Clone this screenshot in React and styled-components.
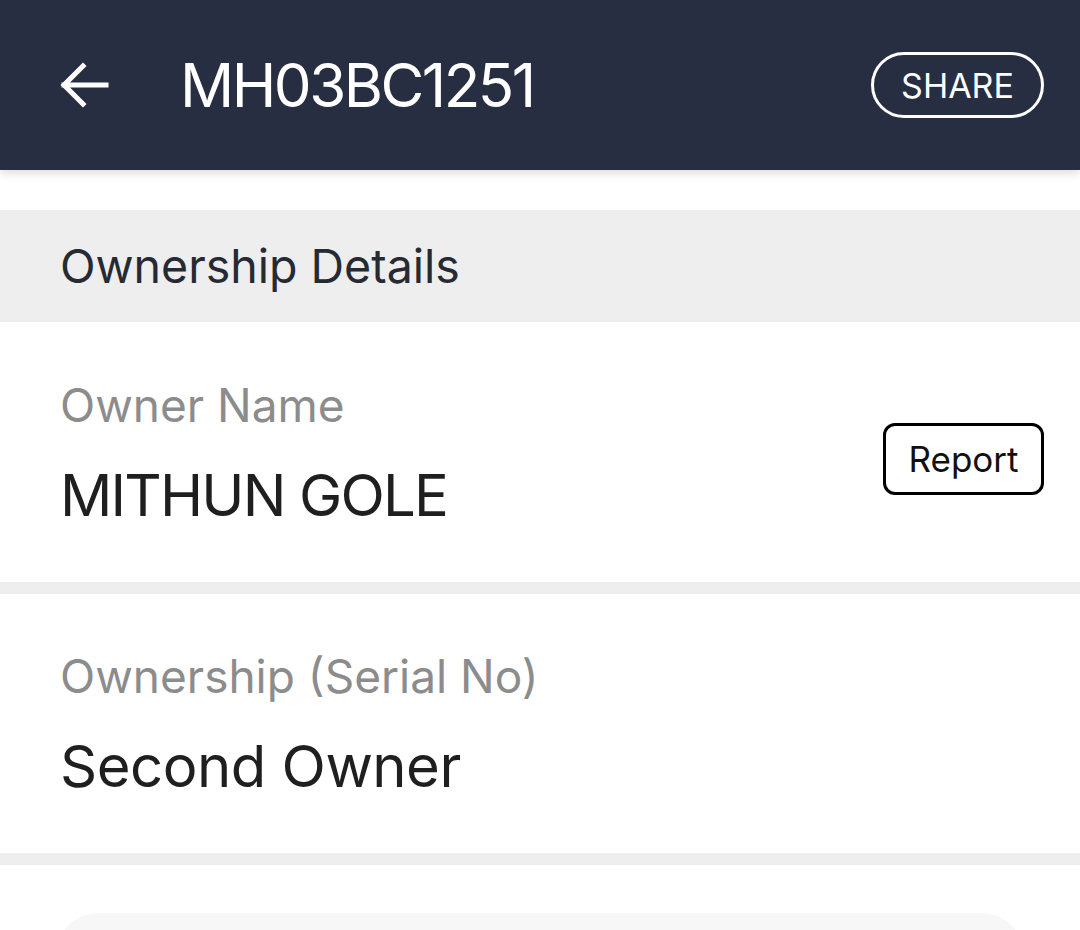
import React from "react";
import styled, { createGlobalStyle } from "styled-components";

const Global = createGlobalStyle`
  html, body { margin: 0; padding: 0; background: #fff; }
  body { font-family: Inter, "Noto Sans", sans-serif; }
`;

const Page = styled.div`
  width: 1080px;
  height: 930px;
  overflow: hidden;
  background: #fff;
`;

const TopBar = styled.header`
  height: 170px;
  background: #282e42;
  display: flex;
  align-items: center;
  padding: 0 36px 0 58px;
  box-sizing: border-box;
  box-shadow: 0 4px 8px rgba(0, 0, 0, 0.12);
  position: relative;
  z-index: 1;
`;

const BackButton = styled.button`
  background: none;
  border: 0;
  padding: 0;
  width: 52px;
  height: 52px;
  display: flex;
  align-items: center;
  justify-content: center;
  cursor: pointer;
`;

const Title = styled.h1`
  flex: 1;
  margin: 0 0 0 70px;
  color: #fff;
  font-size: 60px;
  font-weight: 400;
  letter-spacing: -2.5px;
`;

const ShareButton = styled.button`
  background: transparent;
  color: #fff;
  border: 3px solid #fff;
  border-radius: 40px;
  width: 173px;
  height: 66px;
  font-family: inherit;
  font-size: 34px;
  font-weight: 400;
  cursor: pointer;
`;

const Spacer = styled.div`
  height: 40px;
`;

const SectionHead = styled.div`
  height: 112px;
  background: #eeeeee;
  display: flex;
  align-items: center;
  padding-left: 60px;
  font-size: 46.5px;
  color: #262a33;
`;

const Row = styled.div`
  height: ${(p) => p.h}px;
  display: flex;
  align-items: center;
  justify-content: space-between;
  padding: 0 36px 0 60px;
  border-bottom: 12px solid #eeeeee;
`;

const Field = styled.div`
  display: flex;
  flex-direction: column;
  gap: 28px;
  margin-top: 4px;
`;

const Label = styled.div`
  font-size: 46px;
  color: #8c8c8c;
  line-height: 1.2;
`;

const Value = styled.div`
  font-size: 58px;
  color: #1f1f1f;
  line-height: 1.2;
  letter-spacing: ${(p) => p.ls || -0.5}px;
`;

const ReportButton = styled.button`
  background: #fff;
  border: 3px solid #000;
  border-radius: 12px;
  width: 161px;
  height: 72px;
  margin-top: 13px;
  font-family: inherit;
  font-size: 35px;
  color: #111;
  cursor: pointer;
`;

const Card = styled.div`
  margin: 48px 55px 0;
  height: 120px;
  background: #f7f7f7;
  border-radius: 44px 44px 0 0;
`;

export default function App() {
  return (
    <Page>
      <Global />
      <TopBar>
        <BackButton aria-label="Back">
          <svg width="52" height="52" viewBox="0 0 52 52" fill="none">
            <path
              d="M48 26H6M25 7L6 26l19 19"
              stroke="#fff"
              strokeWidth="5"
              strokeLinecap="square"
            />
          </svg>
        </BackButton>
        <Title>MH03BC1251</Title>
        <ShareButton>SHARE</ShareButton>
      </TopBar>
      <Spacer />
      <SectionHead>Ownership Details</SectionHead>
      <Row h={260}>
        <Field>
          <Label>Owner Name</Label>
          <Value ls={-1.8}>MITHUN GOLE</Value>
        </Field>
        <ReportButton>Report</ReportButton>
      </Row>
      <Row h={259}>
        <Field>
          <Label>Ownership (Serial No)</Label>
          <Value>Second Owner</Value>
        </Field>
      </Row>
      <Card />
    </Page>
  );
}
